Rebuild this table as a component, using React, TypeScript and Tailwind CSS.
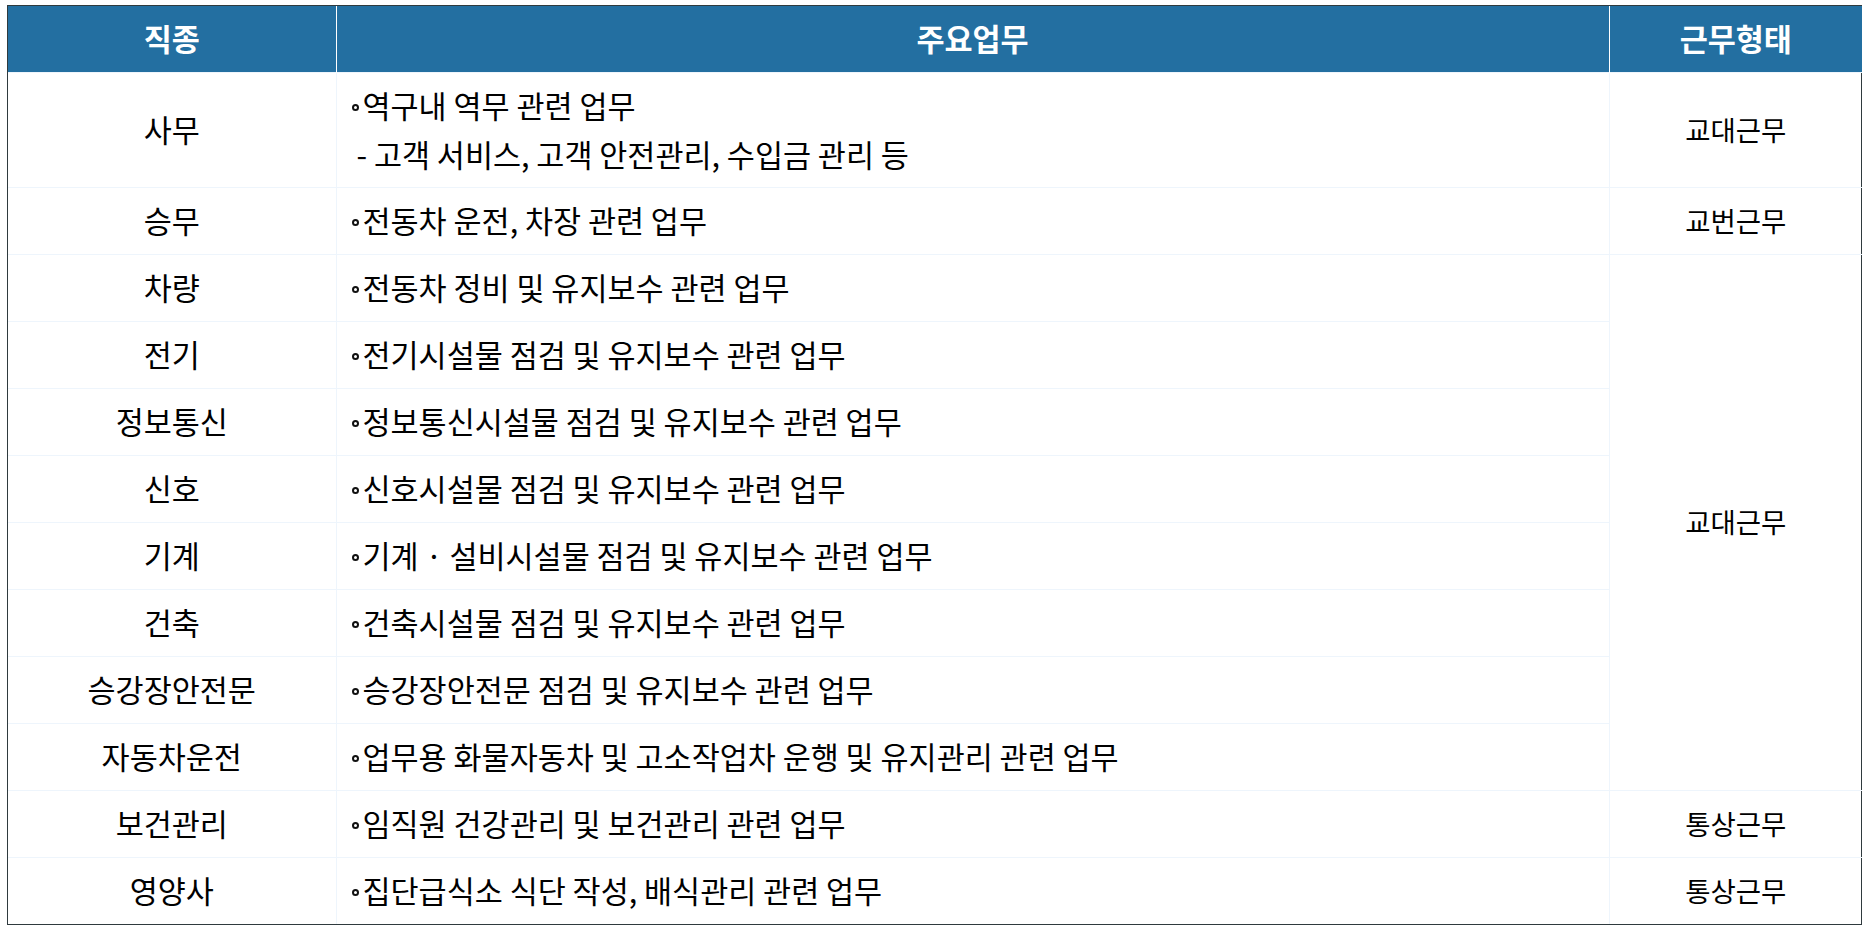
const rows = [
  { job: "사무", duties: ["역구내 역무 관련 업무"], sub: "- 고객 서비스, 고객 안전관리, 수입금 관리 등", type: "교대근무" },
  { job: "승무", duties: ["전동차 운전, 차장 관련 업무"], type: "교번근무" },
  { job: "차량", duties: ["전동차 정비 및 유지보수 관련 업무"], type: "교대근무", span: 8 },
  { job: "전기", duties: ["전기시설물 점검 및 유지보수 관련 업무"] },
  { job: "정보통신", duties: ["정보통신시설물 점검 및 유지보수 관련 업무"] },
  { job: "신호", duties: ["신호시설물 점검 및 유지보수 관련 업무"] },
  { job: "기계", duties: ["기계 · 설비시설물 점검 및 유지보수 관련 업무"] },
  { job: "건축", duties: ["건축시설물 점검 및 유지보수 관련 업무"] },
  { job: "승강장안전문", duties: ["승강장안전문 점검 및 유지보수 관련 업무"] },
  { job: "자동차운전", duties: ["업무용 화물자동차 및 고소작업차 운행 및 유지관리 관련 업무"] },
  { job: "보건관리", duties: ["임직원 건강관리 및 보건관리 관련 업무"], type: "통상근무" },
  { job: "영양사", duties: ["집단급식소 식단 작성, 배식관리 관련 업무"], type: "통상근무" },
];

type Row = { job: string; duties: string[]; sub?: string; type?: string; span?: number };

const Bullet = () => (
  <span className="inline-block w-[7px] h-[7px] rounded-full border-2 border-[#111] mr-[4px] align-middle relative -top-[2px]"></span>
);

export default function App() {
  return (
    <div className="min-h-screen bg-white pt-[5px] pl-[7px] font-['Noto_Sans_CJK_KR','Noto_Sans',sans-serif]">
      <div className="w-[1855px] border border-[#2f3a3e]">
        <table className="w-full border-collapse border-hidden table-fixed">
          <colgroup>
            <col className="w-[328px]" />
            <col className="w-[1273px]" />
            <col className="w-[253px]" />
          </colgroup>
          <thead>
            <tr className="h-[66px] bg-[#236fa1] text-white text-[30.5px] font-bold">
              <th className="border-r border-white">직종</th>
              <th className="border-r border-white">주요업무</th>
              <th>근무형태</th>
            </tr>
          </thead>
          <tbody className="text-black">
            {(rows as Row[]).map((r, i) => (
              <tr key={i} className={i === 0 ? "h-[115px]" : "h-[67px]"}>
                <td className="border border-[#eef5fc] text-center text-[30.5px] leading-[49px]">{r.job}</td>
                <td className="border border-[#eef5fc] pl-[15px] text-[30.5px] leading-[49px]">
                  {r.duties.map((d) => (
                    <div key={d}>
                      <Bullet />
                      {d}
                    </div>
                  ))}
                  {r.sub && <div className="pl-[5px]">{r.sub}</div>}
                </td>
                {r.type && (
                  <td rowSpan={r.span ?? 1} className="border border-[#eef5fc] text-center text-[27.5px]">
                    {r.type}
                  </td>
                )}
              </tr>
            ))}
          </tbody>
        </table>
      </div>
    </div>
  );
}
